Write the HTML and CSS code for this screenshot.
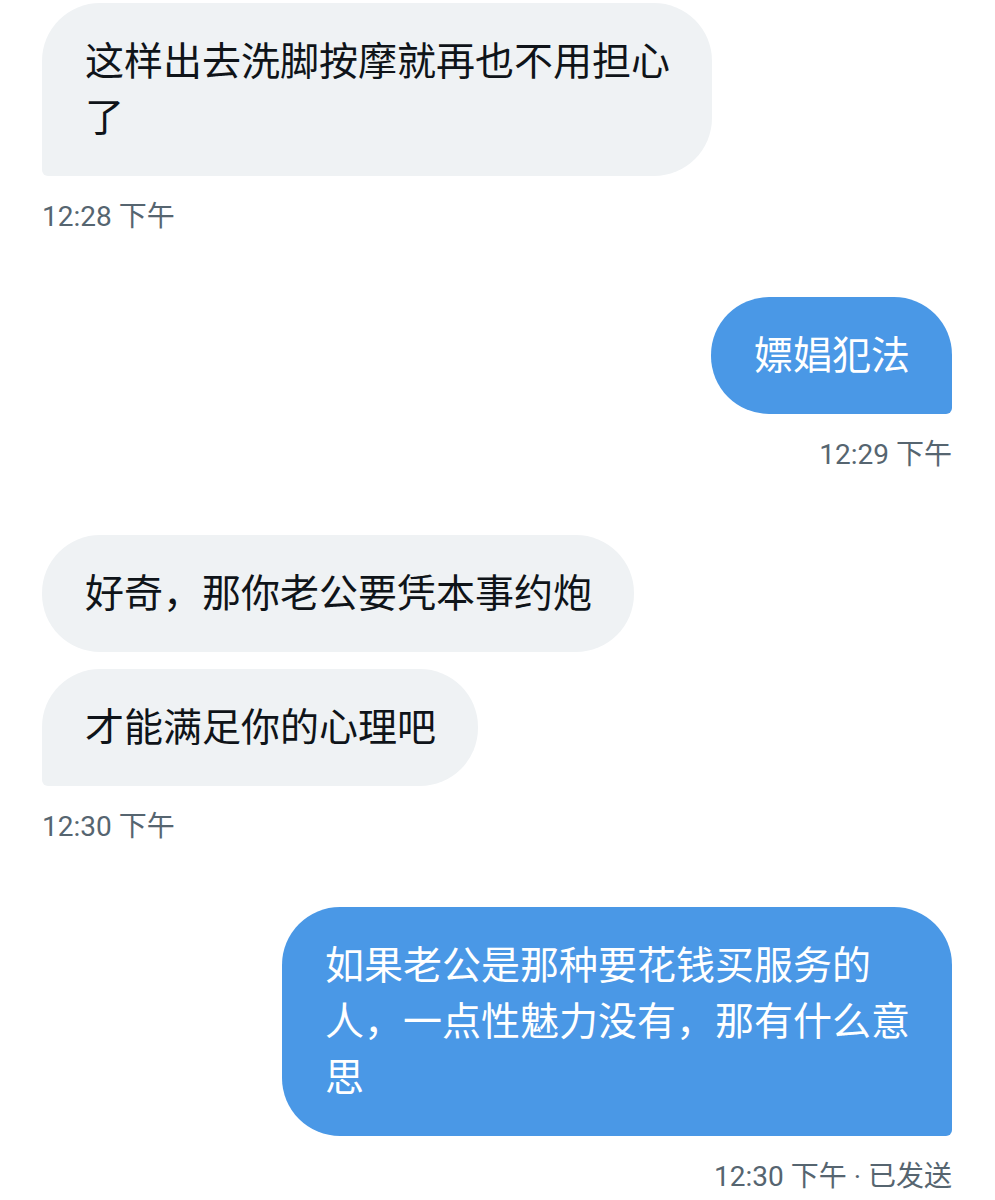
FILE: index.html
```html
<!DOCTYPE html>
<html lang="zh-CN">
<head>
    <meta charset="UTF-8">
    <meta name="viewport" content="width=device-width, initial-scale=1.0">
    <title>Messages</title>
    <link rel="stylesheet" href="styles.css">
</head>
<body>

    <div class="chat">
        <div class="group received">
            <div class="bubble last">这样出去洗脚按摩就再也不用担心了</div>
            <div class="meta">12:28 下午</div>
        </div>

        <div class="group sent">
            <div class="bubble last">嫖娼犯法</div>
            <div class="meta">12:29 下午</div>
        </div>

        <div class="group received">
            <div class="bubble">好奇，那你老公要凭本事约炮</div>
            <div class="bubble last">才能满足你的心理吧</div>
            <div class="meta">12:30 下午</div>
        </div>

        <div class="group sent">
            <div class="bubble last">如果老公是那种要花钱买服务的人，一点性魅力没有，那有什么意思</div>
            <div class="meta">12:30 下午 · 已发送</div>
        </div>
    </div>

</body>
</html>
```

FILE: styles.css
```css
body {
    margin: 0;
    background: #fff;
    font-family: Roboto, "Noto Sans CJK SC", sans-serif;
}
.chat {
    display: flex;
    flex-direction: column;
    gap: 60px;
    padding: 3px 43px 0 42px;
}
.group {
    display: flex;
    flex-direction: column;
    gap: 17px;
}
.received {
    align-items: flex-start;
}
.sent {
    align-items: flex-end;
}
.bubble {
    max-width: 585px;
    padding: 31px 42px 30px 43px;
    font-size: 39px;
    line-height: 56px;
    border-radius: 58px;
    color: #0f1419;
}
.received .bubble {
    background: #eff2f4;
}
.received .bubble.last {
    border-bottom-left-radius: 6px;
}
.sent .bubble {
    background: #4a98e6;
    color: #fff;
}
.sent .bubble.last {
    border-bottom-right-radius: 6px;
}
.meta {
    margin-top: 4px;
    font-size: 28px;
    line-height: 40px;
    color: #566570;
}
```
